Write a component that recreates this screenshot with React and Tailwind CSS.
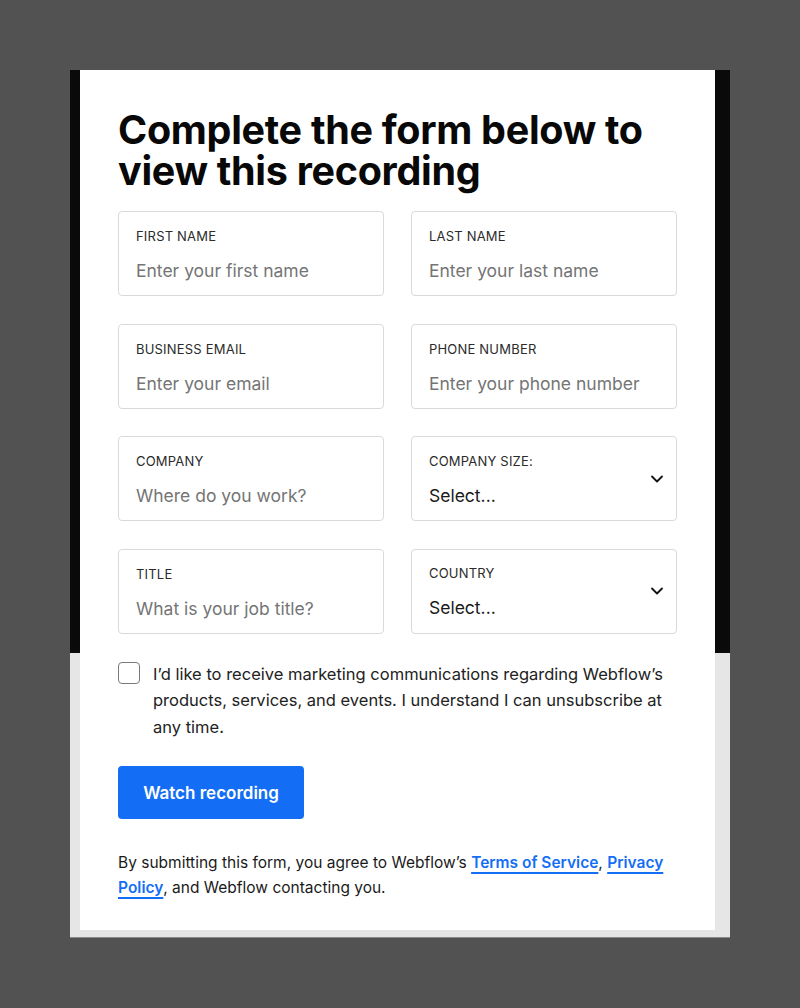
import React from "react";

function Field({ label, placeholder }) {
  return (
    <div className="h-[85px] rounded-[4px] border border-[#d9d9d9] bg-white pl-[17px] pr-4 pt-[15px]">
      <div className="text-[13px] leading-[18px] tracking-[0.2px] text-[#2b2b2b]">{label}</div>
      <div className="mt-[15px] text-[17.5px] leading-[22px] text-[#757575]">{placeholder}</div>
    </div>
  );
}

function SelectField({ label }) {
  return (
    <div className="flex h-[85px] items-center justify-between rounded-[4px] border border-[#d9d9d9] bg-white pl-[17px] pr-[12px]">
      <div className="pt-[1px]">
        <div className="text-[13px] leading-[18px] tracking-[0.2px] text-[#2b2b2b]">{label}</div>
        <div className="mt-[15px] text-[17.5px] leading-[22px] text-[#1a1a1a]">Select...</div>
      </div>
      <svg width="14" height="14" viewBox="0 0 14 14" fill="none">
        <path d="M2 4.5L7 9.5L12 4.5" stroke="#111" strokeWidth="1.8" strokeLinecap="round" strokeLinejoin="round" />
      </svg>
    </div>
  );
}

export default function App() {
  return (
    <div className="h-[1008px] w-full bg-[#525252] pl-[70px] pt-[70px]" style={{ fontFamily: "Inter, 'Noto Sans', sans-serif" }}>
      <div className="h-[868px] w-[660px] border-b border-[#8a8a8a] bg-[linear-gradient(to_bottom,#0a0a0a_583px,#e6e6e6_583px)] pl-[10px]">
        <div className="h-[860px] w-[635px] bg-white px-[38px] pt-[40px]">
          <h1 className="text-[39.5px] font-bold leading-[41px] tracking-[-0.3px] text-[#080808]">
            Complete the form below to view this recording
          </h1>
          <div className="mt-[19px] grid grid-cols-2 gap-x-[27px] gap-y-[27.5px]">
            <Field label="FIRST NAME" placeholder="Enter your first name" />
            <Field label="LAST NAME" placeholder="Enter your last name" />
            <Field label="BUSINESS EMAIL" placeholder="Enter your email" />
            <Field label="PHONE NUMBER" placeholder="Enter your phone number" />
            <Field label="COMPANY" placeholder="Where do you work?" />
            <SelectField label="COMPANY SIZE:" />
            <Field label="TITLE" placeholder="What is your job title?" />
            <SelectField label="COUNTRY" />
          </div>
          <div className="mt-[27px] flex gap-[13px]">
            <div className="mt-[1px] h-[22px] w-[22px] shrink-0 rounded-[4px] border-[1.5px] border-[#7a7a7a]" />
            <p className="text-[16.5px] leading-[26.5px] text-[#222]">
              I’d like to receive marketing communications regarding Webflow’s products, services, and events. I understand I can unsubscribe at any time.
            </p>
          </div>
          <button className="mt-[26px] flex h-[53px] w-[186px] items-center justify-center rounded-[4px] bg-[#146ef5] pt-[3px] text-[17px] font-semibold text-white">
            Watch recording
          </button>
          <p className="mt-[31px] text-[15.5px] leading-[25px] text-[#1a1a1a]">
            By submitting this form, you agree to Webflow’s{" "}
            <a className="font-semibold text-[#146ef5] underline decoration-2 underline-offset-[4px]">Terms of Service</a>,{" "}
            <a className="font-semibold text-[#146ef5] underline decoration-2 underline-offset-[4px]">Privacy Policy</a>, and Webflow contacting you.
          </p>
        </div>
      </div>
    </div>
  );
}
